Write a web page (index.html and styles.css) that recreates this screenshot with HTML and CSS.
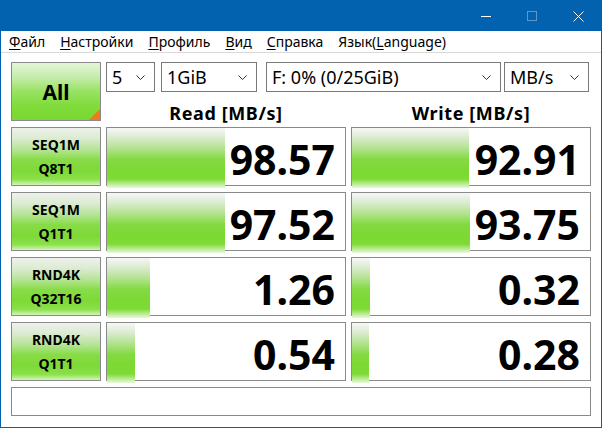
FILE: index.html
```html
<!DOCTYPE html>
<html lang="ru">
<head>
    <meta charset="UTF-8">
    <title>CrystalDiskMark</title>
    <link rel="stylesheet" href="styles.css">
</head>
<body>
    <div class="window">
        <header class="titlebar">
            <div class="caption-btn">
                <svg width="10" height="10" viewBox="0 0 10 10"><line x1="0" y1="5.5" x2="10" y2="5.5"/></svg>
            </div>
            <div class="caption-btn disabled">
                <svg width="10" height="10" viewBox="0 0 10 10"><rect x="0.5" y="0.5" width="9" height="9"/></svg>
            </div>
            <div class="caption-btn">
                <svg width="11" height="11" viewBox="0 0 11 11"><path d="M0.5 0.5 L10.5 10.5 M10.5 0.5 L0.5 10.5"/></svg>
            </div>
        </header>

        <nav class="menubar">
            <span class="menu-item"><u>Ф</u>айл</span>
            <span class="menu-item"><u>Н</u>астройки</span>
            <span class="menu-item"><u>П</u>рофиль</span>
            <span class="menu-item"><u>В</u>ид</span>
            <span class="menu-item"><u>С</u>правка</span>
            <span class="menu-item">Язык(<u>L</u>anguage)</span>
        </nav>

        <main class="panel">
            <div class="test-btn all-btn">All</div>

            <div class="settings">
                <div class="combo combo-count">5<svg class="chev" width="9" height="5" viewBox="0 0 9 5"><polyline points="0.5,0.5 4.5,4.5 8.5,0.5"/></svg></div>
                <div class="combo combo-size">1GiB<svg class="chev" width="9" height="5" viewBox="0 0 9 5"><polyline points="0.5,0.5 4.5,4.5 8.5,0.5"/></svg></div>
                <div class="combo combo-drive">F: 0% (0/25GiB)<svg class="chev" width="9" height="5" viewBox="0 0 9 5"><polyline points="0.5,0.5 4.5,4.5 8.5,0.5"/></svg></div>
                <div class="combo combo-unit">MB/s<svg class="chev" width="9" height="5" viewBox="0 0 9 5"><polyline points="0.5,0.5 4.5,4.5 8.5,0.5"/></svg></div>
            </div>

            <div class="col-head">Read [MB/s]</div>
            <div class="col-head">Write [MB/s]</div>

            <!-- SEQ1M Q8T1 -->
            <div class="test-btn">SEQ1M<br>Q8T1</div>
            <div class="cell"><div class="bar" style="width: 49.6%"></div><div class="val">98.57</div></div>
            <div class="cell"><div class="bar" style="width: 49.2%"></div><div class="val">92.91</div></div>

            <!-- SEQ1M Q1T1 -->
            <div class="test-btn">SEQ1M<br>Q1T1</div>
            <div class="cell"><div class="bar" style="width: 49.6%"></div><div class="val">97.52</div></div>
            <div class="cell"><div class="bar" style="width: 49.4%"></div><div class="val">93.75</div></div>

            <!-- RND4K Q32T16 -->
            <div class="test-btn">RND4K<br>Q32T16</div>
            <div class="cell"><div class="bar" style="width: 18%"></div><div class="val">1.26</div></div>
            <div class="cell"><div class="bar" style="width: 7.6%"></div><div class="val">0.32</div></div>

            <!-- RND4K Q1T1 -->
            <div class="test-btn">RND4K<br>Q1T1</div>
            <div class="cell"><div class="bar" style="width: 11.8%"></div><div class="val">0.54</div></div>
            <div class="cell"><div class="bar" style="width: 7.1%"></div><div class="val">0.28</div></div>

            <div class="comment"></div>
        </main>
    </div>
</body>
</html>
```

FILE: styles.css
```css
:root {
    --accent: #0362b0;
    --border: #8a8a8a;
    --combo-border: #7a7a7a;
    --text: #000;
}

* {
    margin: 0;
    padding: 0;
    box-sizing: border-box;
}

body {
    font-family: 'Noto Sans', 'Open Sans', sans-serif;
    color: var(--text);
    background: #fff;
}

.window {
    width: 602px;
    height: 428px;
    border: 1px solid var(--accent);
    background: #fff;
    display: flex;
    flex-direction: column;
}

/* title bar */
.titlebar {
    height: 30px;
    background: var(--accent);
    display: flex;
    justify-content: flex-end;
}

.caption-btn {
    width: 46px;
    display: flex;
    align-items: center;
    justify-content: center;
}

.caption-btn svg {
    stroke: #fff;
    stroke-width: 1;
    fill: none;
}

.caption-btn.disabled svg {
    stroke: rgba(255, 255, 255, 0.35);
}

/* menu */
.menubar {
    height: 22px;
    display: flex;
    align-items: center;
    border-bottom: 1px solid #d9d9d9;
    font-size: 14px;
    padding-left: 0.5px;
}

.menu-item {
    padding: 0 7.5px;
    line-height: 21px;
}

.menu-item u {
    text-decoration-thickness: 1px;
    text-underline-offset: 2px;
}

/* main panel */
.panel {
    padding: 9px 10px 0 10px;
    display: grid;
    grid-template-columns: 90px 240px 240px;
    grid-template-rows: 30px 23px repeat(4, 59px) 29px;
    column-gap: 5px;
    row-gap: 6px;
}

.test-btn {
    border: 1px solid var(--border);
    background: linear-gradient(to bottom, #eef1ec 0%, #dcebd2 18%, #b6e496 38%, #88dc48 55%, #7ed936 75%, #8ae14a 90%, #d2f4b8 100%);
    font-weight: 700;
    font-size: 14px;
    line-height: 24px;
    text-align: center;
    display: flex;
    align-items: center;
    justify-content: center;
}

.all-btn {
    grid-row: 1 / 3;
    font-size: 21px;
    position: relative;
    background: linear-gradient(to bottom, #e4f5d8 0%, #c4ecaa 25%, #98e262 50%, #80dc3a 75%, #7ad832 100%);
}

.all-btn::after {
    content: "";
    position: absolute;
    right: 0;
    bottom: 0;
    border-style: solid;
    border-width: 0 0 11px 11px;
    border-color: transparent transparent #f07a1a transparent;
}

.settings {
    grid-column: 2 / 4;
    display: grid;
    grid-template-columns: 49px 96px 235px 85px;
    column-gap: 6px;
}

.combo-drive {
    margin-left: 3px;
    margin-right: -3px;
}

.combo {
    border: 1px solid var(--combo-border);
    font-size: 18px;
    padding-left: 5px;
    display: flex;
    align-items: center;
    justify-content: space-between;
    padding-right: 9px;
    line-height: 1;
}

.chev {
    stroke: #333;
    stroke-width: 1;
    fill: none;
    flex-shrink: 0;
}

.col-head {
    font-weight: 700;
    font-size: 18px;
    text-align: center;
    line-height: 23px;
    padding-top: 4px;
    letter-spacing: 0.6px;
}

.cell {
    border: 1px solid var(--border);
    display: grid;
}

.cell > * {
    grid-area: 1 / 1;
}

.bar {
    height: 100%;
    background: linear-gradient(to bottom, #f7f7f7 0%, #dcecd2 15%, #b0e28a 35%, #84da42 52%, #7cd832 70%, #7fda36 85%, #c6efa6 95%, #e8f8dc 100%);
}

.val {
    justify-self: end;
    align-self: center;
    font-weight: 700;
    font-size: 41px;
    line-height: 57px;
    padding: 3px 10px 0 0;
}

.comment {
    grid-column: 1 / 4;
    border: 1px solid var(--border);
}
```
